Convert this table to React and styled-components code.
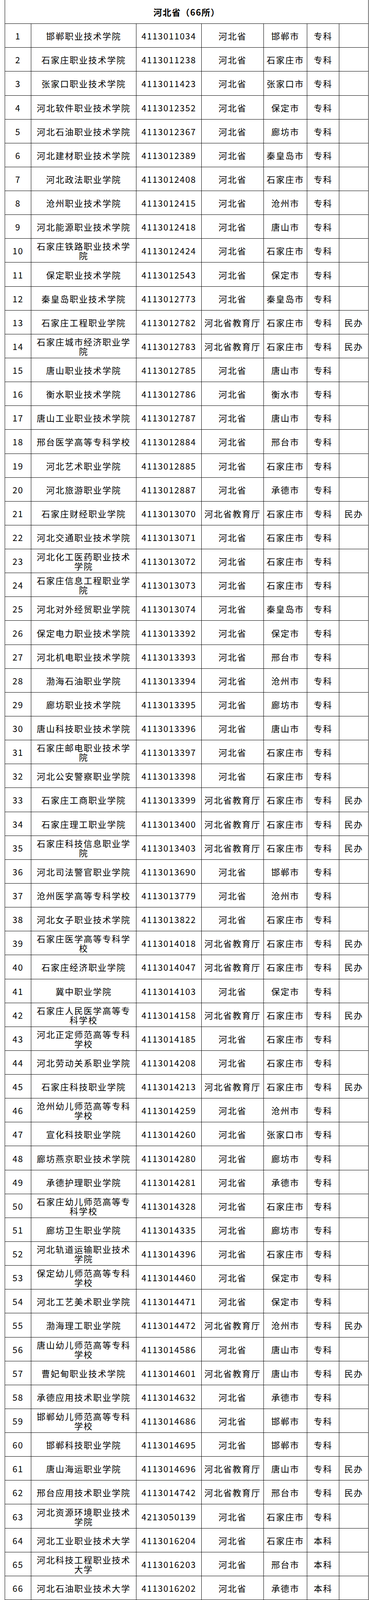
import React from "react";
import styled, { createGlobalStyle } from "styled-components";

const GlobalStyle = createGlobalStyle`
  html, body {
    margin: 0;
    padding: 0;
    background: #ffffff;
  }
  body {
    font-family: "Noto Sans CJK SC", "Noto Sans", sans-serif;
    color: #000000;
  }
`;

const rows = [
  "1 邯郸职业技术学院 4113011034 河北省 邯郸市 专科",
  "2 石家庄职业技术学院 4113011238 河北省 石家庄市 专科",
  "3 张家口职业技术学院 4113011423 河北省 张家口市 专科",
  "4 河北软件职业技术学院 4113012352 河北省 保定市 专科",
  "5 河北石油职业技术学院 4113012367 河北省 廊坊市 专科",
  "6 河北建材职业技术学院 4113012389 河北省 秦皇岛市 专科",
  "7 河北政法职业学院 4113012408 河北省 石家庄市 专科",
  "8 沧州职业技术学院 4113012415 河北省 沧州市 专科",
  "9 河北能源职业技术学院 4113012418 河北省 唐山市 专科",
  "10 石家庄铁路职业技术学院 4113012424 河北省 石家庄市 专科",
  "11 保定职业技术学院 4113012543 河北省 保定市 专科",
  "12 秦皇岛职业技术学院 4113012773 河北省 秦皇岛市 专科",
  "13 石家庄工程职业学院 4113012782 河北省教育厅 石家庄市 专科 民办",
  "14 石家庄城市经济职业学院 4113012783 河北省教育厅 石家庄市 专科 民办",
  "15 唐山职业技术学院 4113012785 河北省 唐山市 专科",
  "16 衡水职业技术学院 4113012786 河北省 衡水市 专科",
  "17 唐山工业职业技术学院 4113012787 河北省 唐山市 专科",
  "18 邢台医学高等专科学校 4113012884 河北省 邢台市 专科",
  "19 河北艺术职业学院 4113012885 河北省 石家庄市 专科",
  "20 河北旅游职业学院 4113012887 河北省 承德市 专科",
  "21 石家庄财经职业学院 4113013070 河北省教育厅 石家庄市 专科 民办",
  "22 河北交通职业技术学院 4113013071 河北省 石家庄市 专科",
  "23 河北化工医药职业技术学院 4113013072 河北省 石家庄市 专科",
  "24 石家庄信息工程职业学院 4113013073 河北省 石家庄市 专科",
  "25 河北对外经贸职业学院 4113013074 河北省 秦皇岛市 专科",
  "26 保定电力职业技术学院 4113013392 河北省 保定市 专科",
  "27 河北机电职业技术学院 4113013393 河北省 邢台市 专科",
  "28 渤海石油职业学院 4113013394 河北省 沧州市 专科",
  "29 廊坊职业技术学院 4113013395 河北省 廊坊市 专科",
  "30 唐山科技职业技术学院 4113013396 河北省 唐山市 专科",
  "31 石家庄邮电职业技术学院 4113013397 河北省 石家庄市 专科",
  "32 河北公安警察职业学院 4113013398 河北省 石家庄市 专科",
  "33 石家庄工商职业学院 4113013399 河北省教育厅 石家庄市 专科 民办",
  "34 石家庄理工职业学院 4113013400 河北省教育厅 石家庄市 专科 民办",
  "35 石家庄科技信息职业学院 4113013403 河北省教育厅 石家庄市 专科 民办",
  "36 河北司法警官职业学院 4113013690 河北省 邯郸市 专科",
  "37 沧州医学高等专科学校 4113013779 河北省 沧州市 专科",
  "38 河北女子职业技术学院 4113013822 河北省 石家庄市 专科",
  "39 石家庄医学高等专科学校 4113014018 河北省教育厅 石家庄市 专科 民办",
  "40 石家庄经济职业学院 4113014047 河北省教育厅 石家庄市 专科 民办",
  "41 冀中职业学院 4113014103 河北省 保定市 专科",
  "42 石家庄人民医学高等专科学校 4113014158 河北省教育厅 石家庄市 专科 民办",
  "43 河北正定师范高等专科学校 4113014185 河北省 石家庄市 专科",
  "44 河北劳动关系职业学院 4113014208 河北省 石家庄市 专科",
  "45 石家庄科技职业学院 4113014213 河北省教育厅 石家庄市 专科 民办",
  "46 沧州幼儿师范高等专科学校 4113014259 河北省 沧州市 专科",
  "47 宣化科技职业学院 4113014260 河北省 张家口市 专科",
  "48 廊坊燕京职业技术学院 4113014280 河北省 廊坊市 专科",
  "49 承德护理职业学院 4113014281 河北省 承德市 专科",
  "50 石家庄幼儿师范高等专科学校 4113014328 河北省 石家庄市 专科",
  "51 廊坊卫生职业学院 4113014335 河北省 廊坊市 专科",
  "52 河北轨道运输职业技术学院 4113014396 河北省 石家庄市 专科",
  "53 保定幼儿师范高等专科学校 4113014460 河北省 保定市 专科",
  "54 河北工艺美术职业学院 4113014471 河北省 保定市 专科",
  "55 渤海理工职业学院 4113014472 河北省教育厅 沧州市 专科 民办",
  "56 唐山幼儿师范高等专科学校 4113014586 河北省 唐山市 专科",
  "57 曹妃甸职业技术学院 4113014601 河北省教育厅 唐山市 专科 民办",
  "58 承德应用技术职业学院 4113014632 河北省 承德市 专科",
  "59 邯郸幼儿师范高等专科学校 4113014686 河北省 邯郸市 专科",
  "60 邯郸科技职业学院 4113014695 河北省 邯郸市 专科",
  "61 唐山海运职业学院 4113014696 河北省教育厅 唐山市 专科 民办",
  "62 邢台应用技术职业学院 4113014742 河北省教育厅 邢台市 专科 民办",
  "63 河北资源环境职业技术学院 4213050139 河北省 石家庄市 专科",
  "64 河北工业职业技术大学 4113016204 河北省 石家庄市 本科",
  "65 河北科技工程职业技术大学 4113016203 河北省 邢台市 本科",
  "66 河北石油职业技术大学 4113016202 河北省 承德市 本科",
].map((line) => line.split(" "));

// ruled sheet: the 1px gaps over the black background are the grid lines
const Sheet = styled.div`
  display: grid;
  grid-template-columns: 66px 268px 166px 158px 110px 81px 74px;
  grid-template-rows: repeat(67, 1fr);
  gap: 1px;
  box-sizing: border-box;
  width: max-content;
  height: 4096px;
  margin-left: 12px;
  padding: 0 1px 1px 1px;
  background: #000;
  overflow: hidden;
`;

const Title = styled.div`
  grid-column: 1 / -1;
  display: flex;
  align-items: center;
  justify-content: center;
  background: #fff;
  font-size: 22px;
  font-weight: 700;
  letter-spacing: 1.5px;
  line-height: 24px;
`;

const Cell = styled.div`
  display: flex;
  align-items: center;
  justify-content: center;
  min-height: 0;
  overflow: hidden;
  padding: 0 4px;
  background: #fff;
  font-size: 22px;
  line-height: 24px;
  text-align: center;
  white-space: ${(p) => (p.$wrap ? "normal" : "nowrap")};
  letter-spacing: ${(p) => (p.$code ? "1.8px" : "2px")};
`;

export default function App() {
  return (
    <>
      <GlobalStyle />
      <Sheet>
        <Title>河北省（66所）</Title>
        {rows.map(([no, name, code, dept, city, level, kind]) => (
          <React.Fragment key={no}>
            <Cell $code>{no}</Cell>
            <Cell $wrap>{name}</Cell>
            <Cell $code>{code}</Cell>
            <Cell>{dept}</Cell>
            <Cell>{city}</Cell>
            <Cell>{level}</Cell>
            <Cell>{kind || ""}</Cell>
          </React.Fragment>
        ))}
      </Sheet>
    </>
  );
}
